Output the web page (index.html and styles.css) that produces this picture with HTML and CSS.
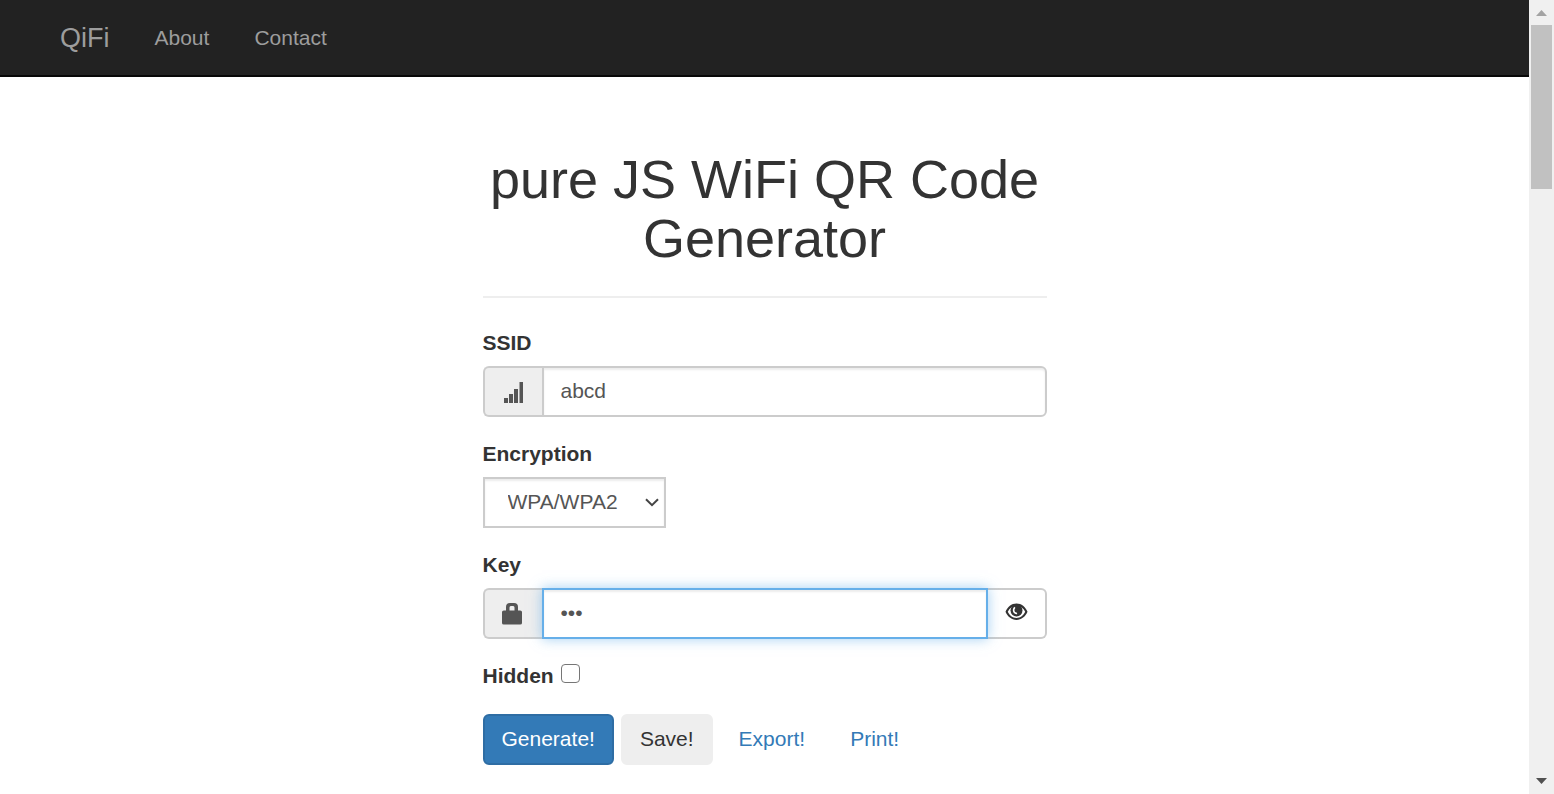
FILE: index.html
```html
<!DOCTYPE html>
<html lang="en">
<head>
<meta charset="utf-8">
<title>QiFi</title>
<link rel="stylesheet" href="styles.css">
</head>
<body>
<div class="window">
  <div class="page">
    <nav class="navbar">
      <a class="brand" href="#">QiFi</a>
      <a class="nav-link" href="#about">About</a>
      <a class="nav-link" href="#contact">Contact</a>
    </nav>
    <main class="content">
      <h1 class="title">pure JS WiFi QR Code Generator</h1>
      <hr class="rule">
      <form class="form">
        <div class="group">
          <label class="label" for="ssid">SSID</label>
          <div class="input-row">
            <span class="addon">
              <svg width="22" height="22" viewBox="0 0 22 22" aria-hidden="true"><path fill="currentColor" d="M2 17h4v5H2zM7 13h4v9H7zM12 8h4v14h-4zM17.500 1H21v21h-3.500z"/></svg>
            </span>
            <input class="control" id="ssid" type="text" value="abcd">
          </div>
        </div>
        <div class="group">
          <label class="label" for="encryption">Encryption</label>
          <div class="select-wrap">
            <select class="select" id="encryption">
              <option>None</option>
              <option selected>WPA/WPA2</option>
              <option>WEP</option>
            </select>
            <svg class="chevron" width="14" height="9" viewBox="0 0 14 9" aria-hidden="true"><path d="M1 1.2l6 6 6-6" fill="none" stroke="currentColor" stroke-width="2"/></svg>
          </div>
        </div>
        <div class="group">
          <label class="label" for="key">Key</label>
          <div class="input-row">
            <span class="addon">
              <svg width="22" height="22" viewBox="0 0 22 22" aria-hidden="true"><path fill="currentColor" fill-rule="evenodd" d="M4 7.500V4q0-4 4-4h4q4 0 4 4v3.500h2.200q1.800 0 1.800 1.500v11q0 1.500-1.800 1.500H1.800Q0 21.500 0 20V9q0-1.500 1.800-1.500zM7.500 7.500h5V4.500q0-1.500-1.300-1.500H8.800q-1.300 0-1.300 1.500z"/></svg>
            </span>
            <input class="control control-active" id="key" type="password" value="abc">
            <button class="eye-button" type="button" aria-label="Show key">
              <svg width="23" height="18" viewBox="0 0 23 18" aria-hidden="true">
                <path fill="currentColor" fill-rule="evenodd" d="M11.500.5C6.500.5 2.500 4 .5 8.800 2.500 13.500 6.500 17 11.500 17s9-3.500 11-8.200C20.500 4 16.500.5 11.500.5zM11.500 3C7.500 3 4.500 5.200 2.800 8.800 4.500 12.500 7.500 15 11.500 15s7-2.500 8.700-6.200C18.500 5.200 15.500 3 11.500 3z"/>
                <circle cx="11.500" cy="7.500" r="6" fill="currentColor"/>
                <path d="M9.800 4.300Q7.700 6.800 9.300 9.300q1.200 1.500 2.700 1" fill="none" stroke="#fff" stroke-width="1.600"/>
              </svg>
            </button>
          </div>
        </div>
        <div class="check-row">
          <label class="label" for="hidden">Hidden</label>
          <input class="check" id="hidden" type="checkbox">
        </div>
        <div class="actions">
          <button class="btn btn-primary" type="button">Generate!</button>
          <button class="btn btn-save" type="button">Save!</button>
          <button class="btn btn-link" type="button">Export!</button>
          <button class="btn btn-link" type="button">Print!</button>
        </div>
      </form>
    </main>
  </div>
  <div class="scrollbar" aria-hidden="true">
    <svg width="25" height="25" viewBox="0 0 25 25"><path fill="#a3a3a3" d="M12.500 10l5.500 6H7z"/></svg>
    <div class="thumb"></div>
    <svg class="arrow-down" width="25" height="25" viewBox="0 0 25 25"><path fill="#505050" d="M7 9h11l-5.500 6z"/></svg>
  </div>
</div>
</body>
</html>
```

FILE: styles.css
```css
* {
  box-sizing: border-box;
}

body {
  margin: 0;
  background: #fff;
  color: #333;
  font-family: "Liberation Sans", Arial, sans-serif;
  font-size: 21px;
  line-height: 30px;
}

input,
select,
button {
  margin: 0;
  font: inherit;
}

.window {
  display: flex;
  height: 100vh;
  overflow: hidden;
}

.page {
  flex: 1;
  min-width: 0;
}

.navbar {
  display: flex;
  align-items: center;
  gap: 45px;
  padding: 23px 60px 22px;
  border-bottom: 2px solid #080808;
  background: #222;
}

.brand,
.nav-link {
  color: #9d9d9d;
  text-decoration: none;
}

.brand {
  font-size: 27px;
}

.content {
  max-width: 564px;
  margin: 0 auto;
  padding-top: 73px;
}

.title {
  margin: 0;
  font-size: 54px;
  font-weight: 400;
  line-height: 59px;
  text-align: center;
}

.rule {
  margin: 28px 0 30px;
  border: 0;
  border-top: 2px solid #eee;
}

.form {
  display: flex;
  flex-direction: column;
  gap: 22px;
}

.group {
  display: flex;
  flex-direction: column;
  align-items: flex-start;
  gap: 8px;
}

.label {
  font-weight: 700;
}

.input-row {
  display: flex;
  width: 100%;
  height: 51px;
}

.addon {
  display: flex;
  align-items: center;
  justify-content: center;
  width: 59px;
  border: 2px solid #ccc;
  border-right: 0;
  border-radius: 6px 0 0 6px;
  background: #eee;
  color: #555;
}

.control {
  flex: 1;
  min-width: 0;
  padding: 7px 17px 9px;
  border: 2px solid #ccc;
  border-radius: 0 6px 6px 0;
  outline: 0;
  background: #fff;
  box-shadow: inset 0 2px 2px rgba(0, 0, 0, 0.075);
  color: #555;
}

.control-active {
  z-index: 1;
  border-color: #66afe9;
  border-radius: 0;
  box-shadow: inset 0 2px 2px rgba(0, 0, 0, 0.075), 0 0 12px rgba(102, 175, 233, 0.6);
}

.eye-button {
  display: flex;
  align-items: center;
  justify-content: center;
  width: 59px;
  padding: 0 0 4px;
  border: 2px solid #ccc;
  border-left: 0;
  border-radius: 0 6px 6px 0;
  background: #fff;
  color: #333;
}

.select-wrap {
  display: grid;
  align-items: center;
}

.select {
  grid-area: 1 / 1;
  width: 183px;
  height: 51px;
  padding: 0 23px 2px;
  border: 2px solid #ccc;
  border-radius: 0;
  appearance: none;
  background: #fff;
  box-shadow: inset 0 2px 2px rgba(0, 0, 0, 0.075);
  color: #555;
}

.chevron {
  grid-area: 1 / 1;
  justify-self: end;
  margin-right: 7px;
  color: #444;
  pointer-events: none;
}

.check-row {
  display: flex;
  align-items: center;
  gap: 7px;
}

.check {
  width: 19px;
  height: 19px;
  margin-bottom: 6px;
  border: 1px solid #767676;
  border-radius: 4px;
  appearance: none;
  background: #fff;
}

.check:checked {
  background: #337ab7;
}

.actions {
  display: flex;
  gap: 7px;
}

.btn {
  height: 51px;
  margin-top: 1px;
  padding: 0 17px 2px;
  border: 2px solid transparent;
  border-radius: 6px;
  background: transparent;
}

.btn-primary {
  border-color: #2e6da4;
  background: #337ab7;
  color: #fff;
}

.btn-save {
  border-color: #eee;
  background: #eee;
  color: #333;
}

.btn-link {
  color: #337ab7;
}

.scrollbar {
  display: flex;
  flex-direction: column;
  width: 25px;
  background: #f0f0f0;
}

.thumb {
  height: 164px;
  margin: 0 2px;
  background: #c1c1c1;
}

.arrow-down {
  margin-top: auto;
}
```
